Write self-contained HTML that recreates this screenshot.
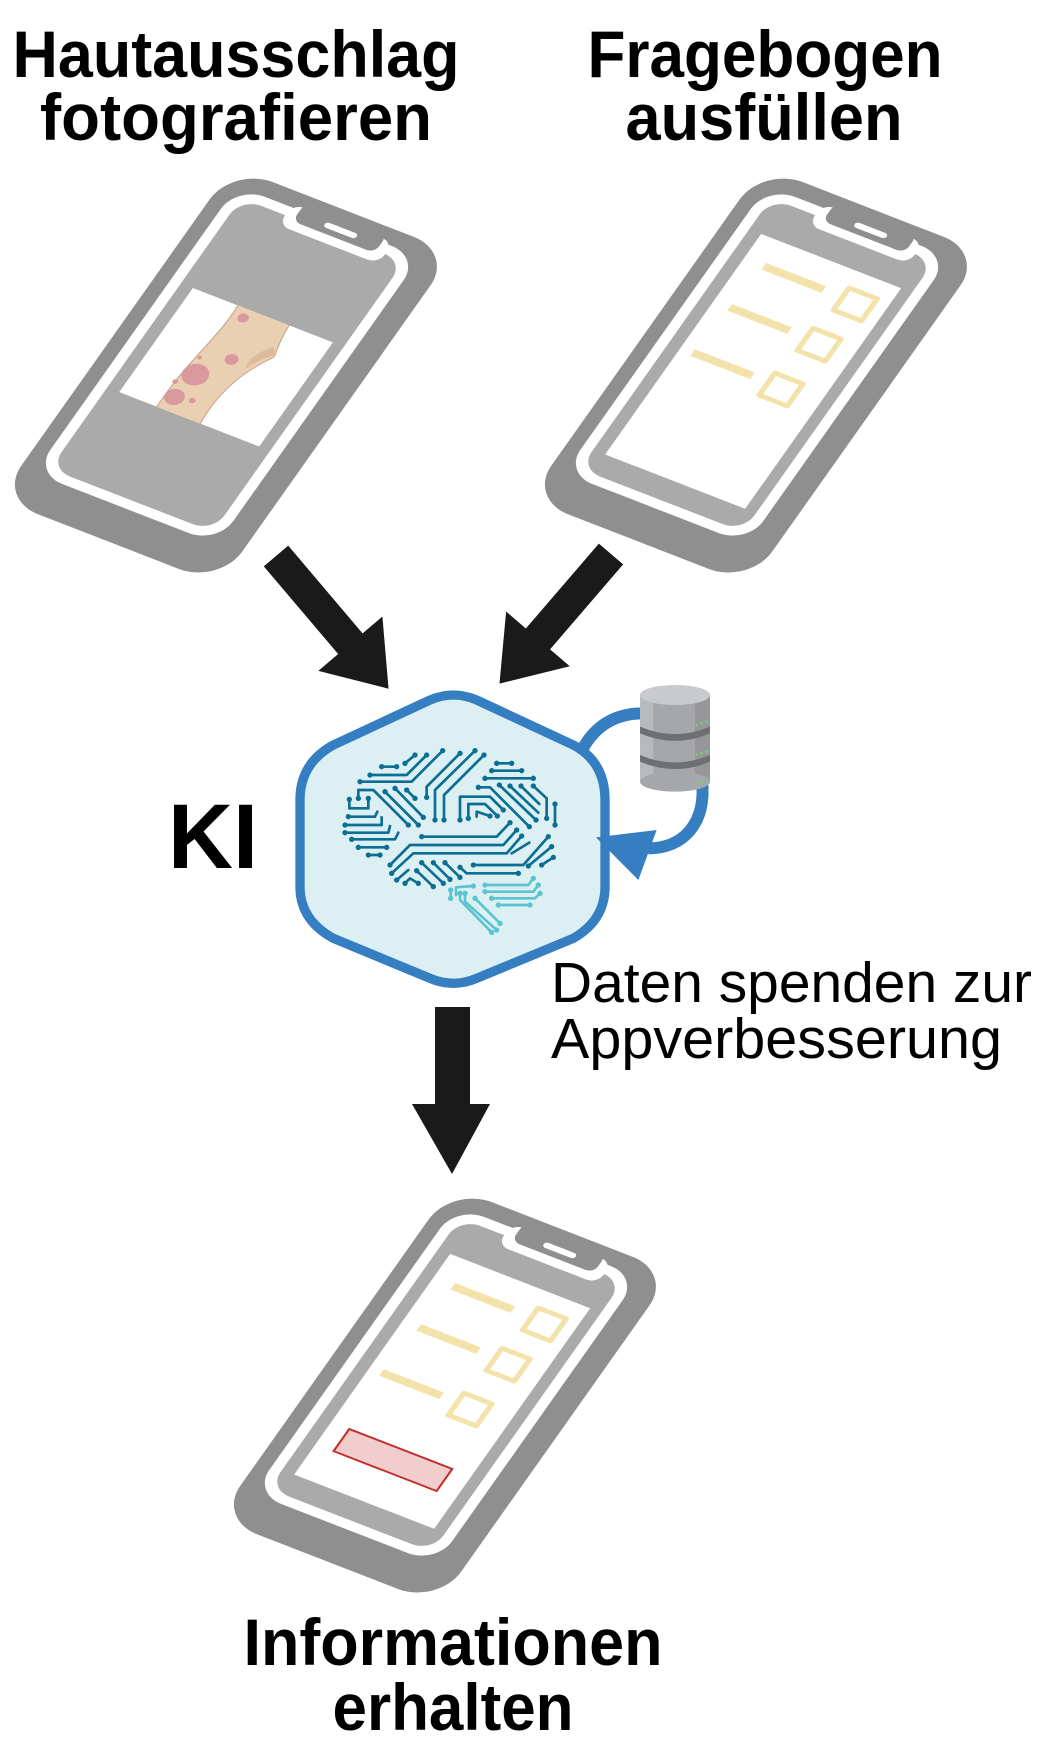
<!DOCTYPE html>
<html><head><meta charset="utf-8"><style>
html,body{margin:0;padding:0;background:#fff;}
svg{display:block;}
text{font-family:"Liberation Sans",sans-serif;}
</style></head><body>
<svg width="1053" height="1757" viewBox="0 0 1053 1757" xmlns="http://www.w3.org/2000/svg">
<defs>
<g id="phonebase">
  <rect x="-14" y="-17" width="221" height="405" rx="40" fill="#8f8f90"/>
  <rect x="0" y="0" width="183" height="350" rx="28" fill="#fff"/>
  <rect x="10" y="10" width="163" height="330" rx="20" fill="#aaaaaa"/>
  <rect x="54" y="-4" width="100" height="26" rx="11" fill="#fff"/>
  <rect x="63" y="-9" width="82" height="22" rx="8" fill="#8f8f90"/>
  <rect x="90" y="1" width="32" height="6" rx="3" fill="#fff"/>
</g>
<g id="form">
  <rect x="22" y="48" width="140" height="269" fill="#fff"/>
  <g stroke="#f3e3aa" stroke-width="8" fill="none">
    <line x1="42" y1="78" x2="102" y2="78"/>
    <line x1="38" y1="130" x2="98" y2="130"/>
    <line x1="34" y1="187" x2="94" y2="187"/>
  </g>
  <g stroke="#f3e3aa" stroke-width="5" fill="none" stroke-linejoin="round">
    <rect x="121" y="67" width="28" height="27"/>
    <rect x="115" y="119" width="28" height="27"/>
    <rect x="110" y="176" width="28" height="27"/>
  </g>
</g>
<clipPath id="photoclip"><rect x="22" y="114" width="140" height="127"/></clipPath>
</defs>

<text x="236" y="77" font-size="66" font-weight="bold" text-anchor="middle" textLength="447" lengthAdjust="spacingAndGlyphs">Hautausschlag</text>
<text x="236" y="140" font-size="66" font-weight="bold" text-anchor="middle" textLength="392" lengthAdjust="spacingAndGlyphs">fotografieren</text>
<text x="765" y="77" font-size="66" font-weight="bold" text-anchor="middle" textLength="355" lengthAdjust="spacingAndGlyphs">Fragebogen</text>
<text x="764" y="140" font-size="66" font-weight="bold" text-anchor="middle" textLength="277" lengthAdjust="spacingAndGlyphs">ausfüllen</text>

<g transform="matrix(1,0.388,-0.58,0.82,237,186)">
  <use href="#phonebase"/>
  <rect x="22" y="114" width="140" height="127" fill="#fff"/>
  <g clip-path="url(#photoclip)">
    <path d="M66,105 C72,150 56,185 60,250 L104,250 C98,205 108,175 124,150 C121,136 118,125 118,105 Z" fill="#ead0b3" stroke="#c9a27f" stroke-width="1"/>
    <path d="M118,140 C110,150 104,160 108,172 C112,162 118,152 124,148 Z" fill="#dcbb9b"/>
    <g fill="#d9999d">
      <circle cx="78" cy="124" r="5"/>
      <circle cx="92" cy="168" r="6"/>
      <circle cx="72" cy="196" r="12"/>
      <circle cx="68" cy="225" r="9"/>
      <circle cx="84" cy="222" r="3"/>
      <circle cx="60" cy="210" r="2.5"/>
      <circle cx="66" cy="178" r="2"/>
    </g>
  </g>
</g>

<g transform="matrix(1,0.388,-0.58,0.82,767,186)">
  <use href="#phonebase"/>
  <use href="#form"/>
</g>

<g transform="matrix(1,0.388,-0.58,0.82,456,1206)">
  <use href="#phonebase"/>
  <use href="#form"/>
  <rect x="40" y="253" width="103" height="27" fill="#f2cdcd" stroke="#c2302a" stroke-width="2"/>
</g>

<g fill="#1a1a1a">
  <polygon transform="translate(276,556) rotate(49.7)" points="0,-16 115,-16 115,-42 174,0 115,42 115,16 0,16"/>
  <polygon transform="translate(611,554) rotate(130.7)" points="0,-16 112,-16 112,-42 171,0 112,42 112,16 0,16"/>
  <rect x="435" y="1007" width="35" height="100"/>
  <polygon points="412,1104 490,1104 452,1174"/>
</g>

<text x="168" y="868" font-size="92" font-weight="bold" textLength="90" lengthAdjust="spacingAndGlyphs">KI</text>

<g transform="translate(290,680) scale(0.33333)">
  <path d="M30,360 Q30,250 130,195 L420,60 Q490,30 560,60 L850,195 Q945,245 945,360 L945,620 Q945,720 850,775 L560,895 Q490,925 420,895 L130,775 Q30,720 30,620 Z" fill="#dcf0f4" stroke="#357ec2" stroke-width="28"/>
  <path d="M872,218 Q930,100 1060,100" fill="none" stroke="#357ec2" stroke-width="36"/>
  <path d="M1236,300 C1250,430 1180,505 1075,505" fill="none" stroke="#357ec2" stroke-width="36"/>
  <polygon points="1100,450 1045,600 918,472" fill="#357ec2"/>
  <g>
    <rect x="1050" y="45" width="210" height="260" fill="#a6a7ab"/>
    <rect x="1050" y="45" width="40" height="260" fill="#b8b9bd"/>
    <rect x="1215" y="45" width="45" height="260" fill="#96979b"/>
    <ellipse cx="1155" cy="305" rx="105" ry="30" fill="#a6a7ab"/>
    <path d="M1050,140 Q1155,185 1260,140 L1260,160 Q1155,205 1050,160 Z" fill="#6e6f73"/>
    <path d="M1050,225 Q1155,270 1260,225 L1260,245 Q1155,290 1050,245 Z" fill="#6e6f73"/>
    <ellipse cx="1155" cy="45" rx="105" ry="30" fill="#c9cace"/>
    <g fill="#7bd06e"><circle cx="1220" cy="135" r="4"/><circle cx="1235" cy="130" r="4"/><circle cx="1250" cy="125" r="4"/>
    <circle cx="1220" cy="225" r="4"/><circle cx="1235" cy="220" r="4"/><circle cx="1250" cy="215" r="4"/>
    <circle cx="1220" cy="312" r="4"/><circle cx="1235" cy="307" r="4"/><circle cx="1250" cy="302" r="4"/></g>
  </g>
  <g fill="none" stroke="#0b6e92" stroke-width="8" stroke-linecap="round" stroke-linejoin="round">
    <path d="M275,260 L320,260"/>
    <path d="M240,285 L350,285 L410,225"/>
    <path d="M345,250 L375,225"/>
    <path d="M210,305 L365,305 L458,212"/>
    <path d="M410,352 L410,320 L510,220"/>
    <path d="M435,420 L435,330 L555,212"/>
    <path d="M462,420 L462,345 L582,225"/>
    <path d="M620,250 L665,250"/>
    <path d="M605,272 L695,272"/>
    <path d="M585,295 L730,295"/>
    <path d="M565,322 L600,322 L718,440"/>
    <path d="M628,315 L738,420"/>
    <path d="M660,318 L745,398"/>
    <path d="M693,318 L748,372"/>
    <path d="M730,318 L770,355 L770,415"/>
    <path d="M795,372 L795,435"/>
    <path d="M510,420 L510,350 L600,350 L640,390"/>
    <path d="M535,415 L535,372 L585,372 L622,408"/>
    <path d="M560,410 L560,395 L600,408"/>
    <path d="M178,358 L178,385 L235,385 L235,355"/>
    <path d="M205,355 L205,330 L250,330 L355,435"/>
    <path d="M285,335 L385,435"/>
    <path d="M315,325 L400,412"/>
    <path d="M350,330 L375,355"/>
    <path d="M175,410 L255,410 L262,395"/>
    <path d="M165,435 L275,435 L275,412"/>
    <path d="M165,458 L295,458 L300,438"/>
    <path d="M185,478 L315,478 L325,458"/>
    <path d="M205,502 L290,502"/>
    <path d="M235,525 L270,525"/>
    <path d="M395,470 L620,470 L660,428"/>
    <path d="M300,555 L360,495 L640,495 L680,450"/>
    <path d="M305,580 L370,520 L650,520 L695,468"/>
    <path d="M320,600 L355,570"/>
    <path d="M345,610 L360,595 L385,610"/>
    <path d="M380,572 L430,620"/>
    <path d="M395,548 L460,610"/>
    <path d="M430,548 L480,598"/>
    <path d="M465,548 L510,592"/>
    <path d="M510,562 L530,580 L685,580"/>
    <path d="M550,555 L700,555 L775,470"/>
    <path d="M715,558 L785,500"/>
    <path d="M755,555 L790,532"/>
    <path d="M665,520 L718,488"/>
  </g>
  <g fill="#0b6e92">
    <circle cx="275" cy="260" r="8"/><circle cx="320" cy="260" r="8"/><circle cx="240" cy="285" r="8"/><circle cx="410" cy="225" r="8"/>
    <circle cx="345" cy="250" r="8"/><circle cx="375" cy="225" r="8"/><circle cx="210" cy="305" r="8"/><circle cx="458" cy="212" r="8"/>
    <circle cx="410" cy="352" r="8"/><circle cx="510" cy="220" r="8"/><circle cx="435" cy="420" r="8"/><circle cx="555" cy="212" r="8"/>
    <circle cx="462" cy="420" r="8"/><circle cx="582" cy="225" r="8"/><circle cx="620" cy="250" r="8"/><circle cx="665" cy="250" r="8"/>
    <circle cx="605" cy="272" r="8"/><circle cx="695" cy="272" r="8"/><circle cx="585" cy="295" r="8"/><circle cx="730" cy="295" r="8"/>
    <circle cx="565" cy="322" r="8"/><circle cx="718" cy="440" r="8"/><circle cx="628" cy="315" r="8"/><circle cx="738" cy="420" r="8"/>
    <circle cx="660" cy="318" r="8"/><circle cx="693" cy="318" r="8"/><circle cx="730" cy="318" r="8"/><circle cx="770" cy="415" r="8"/>
    <circle cx="795" cy="372" r="8"/><circle cx="795" cy="435" r="8"/><circle cx="510" cy="420" r="8"/><circle cx="535" cy="415" r="8"/>
    <circle cx="640" cy="390" r="8"/><circle cx="622" cy="408" r="8"/><circle cx="600" cy="408" r="8"/><circle cx="178" cy="358" r="8"/>
    <circle cx="235" cy="355" r="8"/><circle cx="205" cy="355" r="8"/><circle cx="355" cy="435" r="8"/><circle cx="285" cy="335" r="8"/>
    <circle cx="385" cy="435" r="8"/><circle cx="315" cy="325" r="8"/><circle cx="400" cy="412" r="8"/><circle cx="350" cy="330" r="8"/>
    <circle cx="375" cy="355" r="8"/><circle cx="175" cy="410" r="8"/><circle cx="165" cy="435" r="8"/><circle cx="165" cy="458" r="8"/>
    <circle cx="185" cy="478" r="8"/><circle cx="205" cy="502" r="8"/><circle cx="290" cy="502" r="8"/><circle cx="235" cy="525" r="8"/>
    <circle cx="270" cy="525" r="8"/><circle cx="395" cy="470" r="8"/><circle cx="660" cy="428" r="8"/><circle cx="300" cy="555" r="8"/>
    <circle cx="680" cy="450" r="8"/><circle cx="305" cy="580" r="8"/><circle cx="695" cy="468" r="8"/><circle cx="320" cy="600" r="8"/>
    <circle cx="345" cy="610" r="8"/><circle cx="385" cy="610" r="8"/><circle cx="380" cy="572" r="8"/><circle cx="430" cy="620" r="8"/>
    <circle cx="395" cy="548" r="8"/><circle cx="460" cy="610" r="8"/><circle cx="430" cy="548" r="8"/><circle cx="480" cy="598" r="8"/>
    <circle cx="465" cy="548" r="8"/><circle cx="510" cy="592" r="8"/><circle cx="510" cy="562" r="8"/><circle cx="685" cy="580" r="8"/>
    <circle cx="550" cy="555" r="8"/><circle cx="775" cy="470" r="8"/><circle cx="715" cy="558" r="8"/><circle cx="785" cy="500" r="8"/>
    <circle cx="755" cy="555" r="8"/><circle cx="790" cy="532" r="8"/>
  </g>
  <g fill="none" stroke="#5cc4d0" stroke-width="8" stroke-linecap="round" stroke-linejoin="round">
    <path d="M482,630 L482,655"/>
    <path d="M498,645 L498,622 L550,618"/>
    <path d="M510,640 L510,660 L605,757"/>
    <path d="M525,640 L525,665 L620,750"/>
    <path d="M555,655 L630,730"/>
    <path d="M585,615 L715,615 L730,595"/>
    <path d="M585,635 L730,635 L745,615"/>
    <path d="M605,655 L735,655 L750,640"/>
    <path d="M625,675 L720,675"/>
  </g>
  <g fill="#5cc4d0">
    <circle cx="482" cy="630" r="8"/><circle cx="482" cy="655" r="8"/><circle cx="550" cy="618" r="8"/><circle cx="510" cy="640" r="8"/>
    <circle cx="605" cy="757" r="8"/><circle cx="525" cy="640" r="8"/><circle cx="620" cy="750" r="8"/><circle cx="555" cy="655" r="8"/>
    <circle cx="630" cy="730" r="8"/><circle cx="585" cy="615" r="8"/><circle cx="730" cy="595" r="8"/><circle cx="585" cy="635" r="8"/>
    <circle cx="745" cy="615" r="8"/><circle cx="605" cy="655" r="8"/><circle cx="750" cy="640" r="8"/><circle cx="625" cy="675" r="8"/>
    <circle cx="720" cy="675" r="8"/>
  </g>
</g>

<text x="551" y="1002" font-size="57" textLength="481" lengthAdjust="spacingAndGlyphs">Daten spenden zur</text>
<text x="551" y="1058" font-size="57" textLength="451" lengthAdjust="spacingAndGlyphs">Appverbesserung</text>

<text x="453" y="1665" font-size="66" font-weight="bold" text-anchor="middle" textLength="419" lengthAdjust="spacingAndGlyphs">Informationen</text>
<text x="453" y="1730" font-size="66" font-weight="bold" text-anchor="middle" textLength="241" lengthAdjust="spacingAndGlyphs">erhalten</text>
</svg>
</body></html>
